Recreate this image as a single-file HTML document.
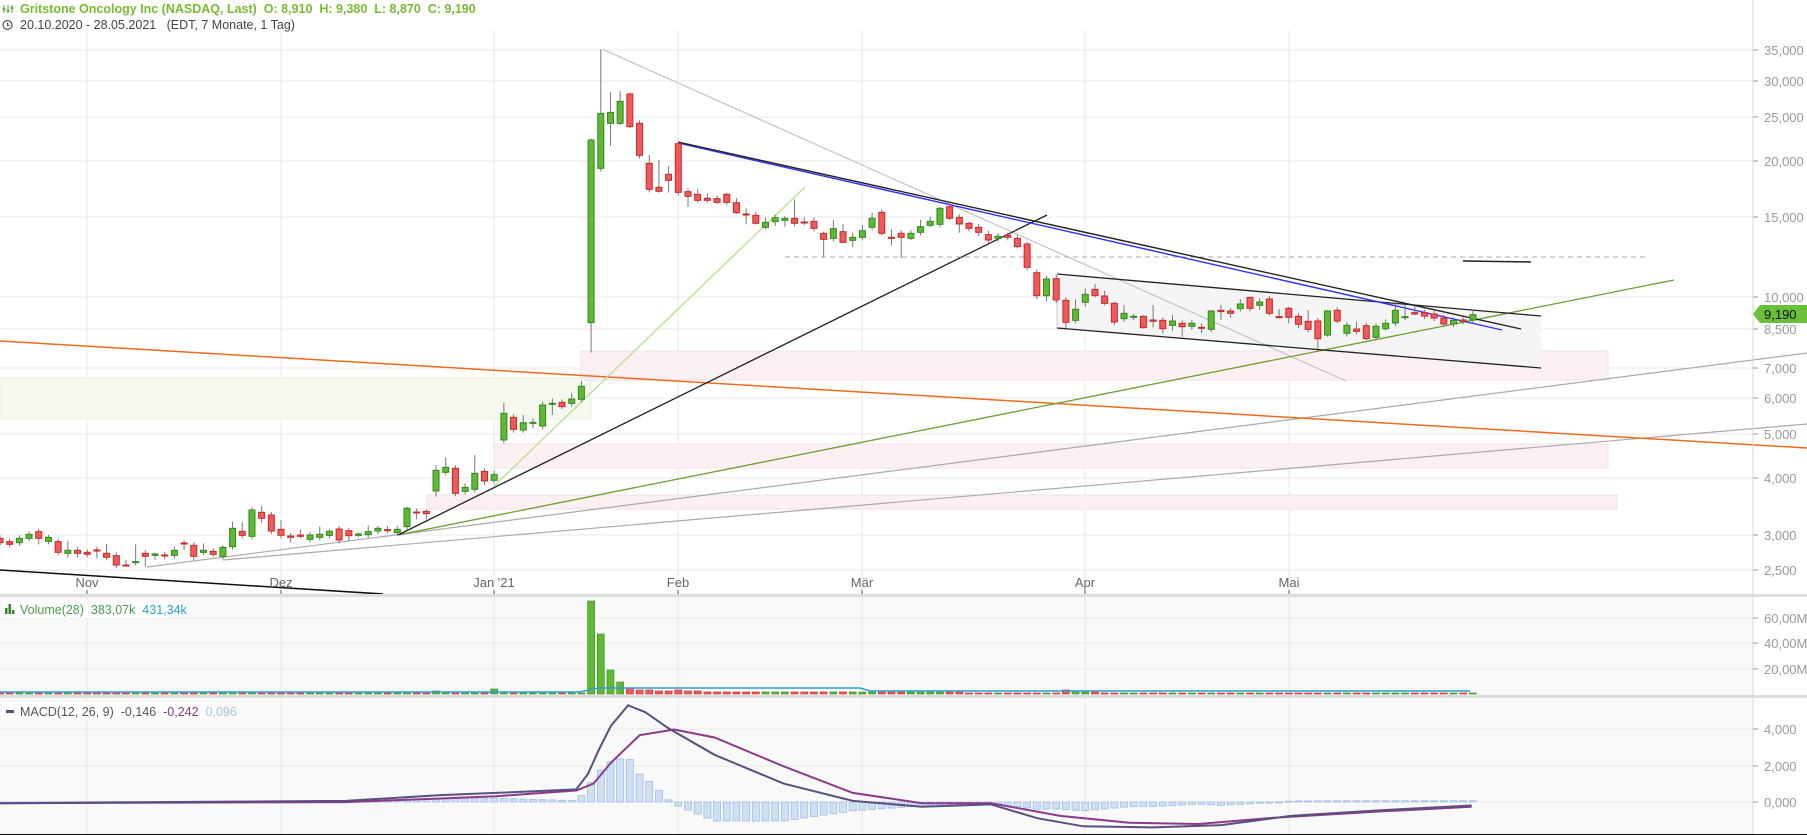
<!DOCTYPE html>
<html><head><meta charset="utf-8">
<style>
html,body{margin:0;padding:0;background:#fff;width:1807px;height:835px;overflow:hidden;font-family:"Liberation Sans",Arial,sans-serif}
svg{position:absolute;left:0;top:0;overflow:hidden}
</style></head><body>
<svg id="s" width="1807" height="835" xmlns="http://www.w3.org/2000/svg" font-family="Liberation Sans, Arial, sans-serif">
<rect x="0" y="0" width="1807" height="835" fill="#fff"/>
<rect x="0" y="597" width="1753" height="98" fill="#f9f9f9"/>
<rect x="0" y="698" width="1753" height="136" fill="#f9f9f9"/>
<g id="grid" stroke="#e9e9e9" stroke-width="1"></g>
<rect x="0" y="378" width="591" height="41" fill="#f5f9ef" stroke="#e6eedd"/>
<rect x="581" y="351" width="1027" height="29" fill="#fcf0f3" stroke="#f0dfe4"/>
<rect x="494" y="444" width="1114" height="24" fill="#fcf0f3" stroke="#f0dfe4"/>
<rect x="427" y="495" width="1190" height="14" fill="#fcf0f3" stroke="#f0dfe4"/>
<polygon points="1057,274 1541,316 1541,368 1057,328" fill="#f3f3f3" fill-opacity="0.85"/>
<g fill="none">
<line x1="0" y1="570" x2="383" y2="594" stroke="#111" stroke-width="1.5"/>
<line x1="147" y1="567" x2="1807" y2="353" stroke="#aaa" stroke-width="1.2"/>
<line x1="223" y1="560" x2="1807" y2="424" stroke="#aaa" stroke-width="1.2"/>
<line x1="0" y1="341" x2="1807" y2="448" stroke="#f26a1e" stroke-width="1.5"/>
<line x1="602" y1="49" x2="1346" y2="381" stroke="#c4c4c4" stroke-width="1.2"/>
<line x1="398" y1="535" x2="1674" y2="280" stroke="#6c9d2e" stroke-width="1.3"/>
<line x1="398" y1="535" x2="1047" y2="215" stroke="#222" stroke-width="1.3"/>
<line x1="494" y1="486" x2="805" y2="187" stroke="#b6e08c" stroke-width="1.3"/>
<line x1="785" y1="257" x2="1646" y2="257" stroke="#aaa" stroke-dasharray="5,4"/>
<line x1="1463" y1="261" x2="1531" y2="262" stroke="#222" stroke-width="1.5"/>
<line x1="1057" y1="274" x2="1541" y2="316" stroke="#222" stroke-width="1.3"/>
<line x1="1057" y1="328" x2="1541" y2="368" stroke="#222" stroke-width="1.3"/>
<line x1="1057" y1="274" x2="1057" y2="328" stroke="#ccc"/>
<line x1="678" y1="143" x2="1502" y2="330" stroke="#3030ff" stroke-width="1.4"/>
<line x1="678" y1="142" x2="1521" y2="329" stroke="#222" stroke-width="1.4"/>
</g>
<g id="candles"></g>
<g id="vol"></g>
<g id="macd"></g>
<rect x="0" y="594" width="1807" height="3" fill="#dedede"/>
<rect x="0" y="695" width="1807" height="3" fill="#dedede"/>
<line x1="1753" y1="0" x2="1753" y2="834" stroke="#d8d8d8"/>
<line x1="0" y1="834.5" x2="1807" y2="834.5" stroke="#111"/>
<g font-size="13" fill="#999" id="ax"></g>
<polygon points="1753,314 1760,305 1807,305 1807,323 1760,323" fill="#6abf3b"/>
<text x="1764" y="319" font-size="13" fill="#111">9,190</text>
<g fill="#6aa84f" stroke="#6aa84f" stroke-width="1.2">
<line x1="4" y1="5" x2="4" y2="13"/><line x1="8" y1="5" x2="8" y2="13"/><line x1="12" y1="5" x2="12" y2="13"/>
<rect x="2.5" y="8" width="3" height="2" stroke="none"/><rect x="6.5" y="10" width="3" height="2" stroke="none"/><rect x="10.5" y="7" width="3" height="2" stroke="none"/>
</g>
<text x="20" y="13" font-size="12.5" fill="#77bb33" font-weight="bold" xml:space="preserve">Gritstone Oncology Inc (NASDAQ, Last)  O: 8,910  H: 9,380  L: 8,870  C: 9,190</text>
<circle cx="7.5" cy="25" r="4.5" fill="none" stroke="#555" stroke-width="1.2"/>
<path d="M7.5 22.5V25.3H9.6" fill="none" stroke="#555" stroke-width="1.1"/>
<text x="20" y="29" font-size="12.5" fill="#444" xml:space="preserve">20.10.2020 - 28.05.2021   (EDT, 7 Monate, 1 Tag)</text>
<rect x="2" y="600" width="166" height="18" fill="#fff"/>
<rect x="5" y="608" width="2.5" height="6" fill="#2e8b1e"/><rect x="8.5" y="604" width="2.5" height="10" fill="#2e8b1e"/><rect x="12" y="610" width="2.5" height="4" fill="#2e8b1e"/>
<text x="20" y="614" font-size="12.5" fill="#4a9a4a" xml:space="preserve">Volume(28)  383,07k  <tspan fill="#2a9fcf">431,34k</tspan></text>
<rect x="2" y="702" width="214" height="18" fill="#fff"/>
<rect x="6" y="710" width="8" height="3" fill="#5a4f7f"/>
<text x="20" y="716" font-size="12.5" fill="#555" xml:space="preserve">MACD(12, 26, 9)  -0,146  <tspan fill="#8b3a7f">-0,242</tspan>  <tspan fill="#a9c4e4">0,096</tspan></text>
</svg>
<script>
var NS="http://www.w3.org/2000/svg";
function el(p,t,a){var e=document.createElementNS(NS,t);for(var k in a)e.setAttribute(k,a[k]);p.appendChild(e);return e;}
var grid=document.getElementById('grid');
var months=[[87,'Nov'],[281,'Dez'],[494,"Jan '21"],[678,'Feb'],[862,'Mär'],[1085,'Apr'],[1289,'Mai']];
months.forEach(function(m){el(grid,'line',{x1:m[0],y1:30,x2:m[0],y2:834});});
var plev=[[50,'35,000'],[81,'30,000'],[117,'25,000'],[161,'20,000'],[217,'15,000'],[297,'10,000'],[329,'8,500'],[368,'7,000'],[398,'6,000'],[434,'5,000'],[478,'4,000'],[535,'3,000'],[570,'2,500'],[618,'60,00M'],[643,'40,00M'],[669,'20,00M'],[729,'4,000'],[766,'2,000'],[802,'0,000']];
var ax=document.getElementById('ax');
plev.forEach(function(p){el(grid,'line',{x1:0,y1:p[0],x2:1753,y2:p[0]});el(ax,'line',{x1:1753,y1:p[0],x2:1758,y2:p[0],stroke:'#999'});var t=el(ax,'text',{x:1764,y:p[0]+5});t.textContent=p[1];});
months.forEach(function(m){el(ax,'line',{x1:m[0],y1:590,x2:m[0],y2:594,stroke:'#555'});var t=el(ax,'text',{x:m[0],y:587,'text-anchor':'middle',fill:'#666'});t.textContent=m[1];});
var A=[[475,488,'r'],[485,493,'r'],[475,488,'g'],[463,475,'g'],[455,475,'r',0,493],[472,484,'g',465,0],[485,517,'r'],[511,520,'g',483,532],[511,520,'r',502,532],[517,523,'r'],[510,512,'r',500,535],[520,532,'r',492,0],[527,555,'r'],[555,556,'r',540,560],[545,547,'g',493,0],[520,529,'r',0,560],[522,526,'g',518,540],[525,526,'r',515,538],[511,526,'g',500,0],[489,490,'r',481,510],[496,529,'r',0,540],[511,517,'g',490,525],[514,523,'r',505,530],[502,529,'g',495,538],[445,500,'g',425,0],[454,466,'r',427,0],[390,469,'g'],[397,415,'r',378,428],[405,453,'r'],[448,466,'r',420,0],[468,472,'r',0,488],[465,469,'r',448,475],[465,478,'g'],[463,472,'g',440,0],[454,466,'g',448,0],[447,480,'r',0,490],[452,467,'r',0,483],[462,466,'g',458,472],[455,464,'g',436,0],[445,453,'g',438,0],[449,452,'r',438,460],[448,458,'g',438,0],[385,440,'g',380,0],[396,397,'r',385,418],[394,401,'r',388,418],[271,333,'g',255,350],[262,277,'g',232,0],[265,340,'r'],[322,334,'g',310,0],[280,328,'g',225,0],[274,303,'r',0,315],[284,301,'g',272,0],[100,180,'g',68,190],[112,148,'r',0,158],[128,150,'g',105,158],[127,130,'g',115,145],[75,138,'g',65,0],[70,71,'g',55,105],[67,80,'r',0,88],[57,70,'g',38,0],[19,58,'g',3,0]];
var B=[[300,848,'g',295,938],[220,385,'g',28,395],[217,250,'g',157,317],[184,250,'g',153,255],[162,260,'r',158,264],[250,346,'r'],[370,448,'r',345,0],[442,454,'r',360,458],[403,421,'r',378,458],[311,457,'r'],[455,469,'r',445,500],[463,481,'r',448,488],[475,481,'r',460,488],[476,487,'r',0,493],[463,487,'r',458,0],[488,518,'r',475,522],[522,524,'r',505,553],[526,550,'r',515,553],[547,562,'g',532,568],[533,545,'g',0,558],[535,541,'g',528,560],[535,550,'r',478,0],[546,547,'r',532,555],[544,565,'r',532,0],[580,598,'r',575,652],[566,595,'g',540,0],[575,607,'r',552,610],[592,601,'g',578,622],[572,592,'g',555,0],[535,562,'g',518,0],[517,580,'r',0,586],[592,593,'r',568,616],[580,592,'r',0,655],[580,595,'g',0,600],[560,577,'g',540,0],[544,556,'g',530,562],[505,553,'g',500,0],[500,535,'r',0,540],[532,552,'r',0,578],[550,565,'r',545,0],[562,577,'r',552,588],[584,600,'r',572,0],[589,595,'g'],[586,592,'r',578,0],[595,620,'r',0,625],[612,682,'r',605,690],[698,767,'r',0,778],[717,767,'g',0,784],[716,780,'r',705,0]];
var C=[[181,247,'r',0,265],[208,241,'g',178,0],[163,187,'g',145,200],[148,167,'r',132,172],[168,190,'r',152,196],[190,246,'r',185,255],[220,236,'g',195,0],[229,230,'g',222,240],[229,263,'r',226,266],[240,244,'r',195,262],[241,266,'r',0,280],[243,256,'g',225,272],[250,260,'r',0,290],[250,259,'g',240,270],[262,263,'r',250,280],[213,268,'g',210,0],[211,215,'r',195,240],[213,220,'r',0,233],[192,206,'g',178,0],[172,205,'r',170,0],[186,196,'g',175,210],[177,220,'r',0,226],[230,231,'r',207,235],[205,232,'r',200,250],[229,253,'r',0,265],[244,268,'r',210,0],[243,296,'r',0,328],[213,285,'g',210,290],[211,243,'r',0,250],[256,280,'g',0,290],[267,274,'r',245,0],[257,296,'r',0,300],[259,292,'g'],[250,266,'g',238,272],[211,249,'g',185,0],[230,231,'g',195,240],[218,222,'r',200,226],[218,228,'r'],[222,234,'r',0,243],[234,252,'r'],[241,252,'g'],[240,244,'r',232,0],[224,240,'g',210,0]];
var all=[];
A.forEach(function(c){all.push([c,380]);});B.forEach(function(c){all.push([c,40]);});C.forEach(function(c){all.push([c,240]);});
var cg=document.getElementById('candles'),vg=document.getElementById('vol');
var vols={61:93,62:60,63:24,64:12,65:6,66:4,67:4,68:3,69:3,70:4,71:3,72:3,51:5,45:3,46:2,24:2,110:4,111:3,112:2,113:2};
all.forEach(function(d,i){var c=d[0],b=d[1],x=i*9.69;
 var t=b+c[0]/3,bo=b+c[1]/3,h=c[3]?b+c[3]/3:t-3,l=c[4]?b+c[4]/3:bo+3;
 var g=c[2]=='g';
 el(cg,'line',{x1:x,y1:h,x2:x,y2:l,stroke:'#777','stroke-width':1});
 el(cg,'rect',{x:x-3,y:t,width:6,height:Math.max(1,bo-t),fill:g?'#62b832':'#ef5a5a',stroke:g?'#2e8b1e':'#c82828','stroke-width':1});
 var v=vols[i]||((i>60&&i<100)?2:1);
 el(vg,'rect',{x:x-3.5,y:694-v,width:7,height:v,fill:g?'#62b832':'#ef5a5a',stroke:g?'#2e8b1e':'#c82828','stroke-width':0.6});
});
el(vg,'polyline',{points:'0,692 580,692 592,689 600,688 860,688 870,691 1470,691',fill:'none',stroke:'#2aa0d0','stroke-width':1.6});
var k=1.1524;
var M=[[0,697],[300,695],[380,690],[430,688],[500,685],[510,672],[520,650],[530,630],[545,612],[560,618],[580,632],[620,655],[680,680],[740,695],[800,700],[860,698],[900,710],[940,717],[1000,718],[1060,716],[1120,708],[1200,703],[1277,699]];
var S=[[0,697],[300,696],[380,693],[430,691],[500,686],[515,680],[530,662],[555,638],[585,633],[620,640],[680,665],[740,688],[800,697],[860,697],[920,708],[980,714],[1040,715],[1100,710],[1200,704],[1277,700]];
function interp(P,x){for(var i=1;i<P.length;i++){if(x<=P[i][0]*k){var a=P[i-1],b=P[i];var t=(x-a[0]*k)/((b[0]-a[0])*k);return (a[1]+(b[1]-a[1])*t)*k;}}return P[P.length-1][1]*k;}
var mg=document.getElementById('macd');
for(var i=0;i<153;i++){var x=i*9.69;var hv=(interp(M,x)-interp(S,x))*1.1;var base=802;
 var y1=Math.min(base,base+hv),hh=Math.max(1,Math.abs(hv));
 el(mg,'rect',{x:x-3.5,y:y1,width:7,height:hh,fill:'#cfe0f5',stroke:'#9fbde3','stroke-width':0.8});}
function pts(P){return P.map(function(p){return (p[0]*k).toFixed(1)+','+(p[1]*k).toFixed(1);}).join(' ');}
el(mg,'polyline',{points:pts(S),fill:'none',stroke:'#8b3a8b','stroke-width':2});
el(mg,'polyline',{points:pts(M),fill:'none',stroke:'#5a4f7f','stroke-width':2});
</script>
</body></html>
